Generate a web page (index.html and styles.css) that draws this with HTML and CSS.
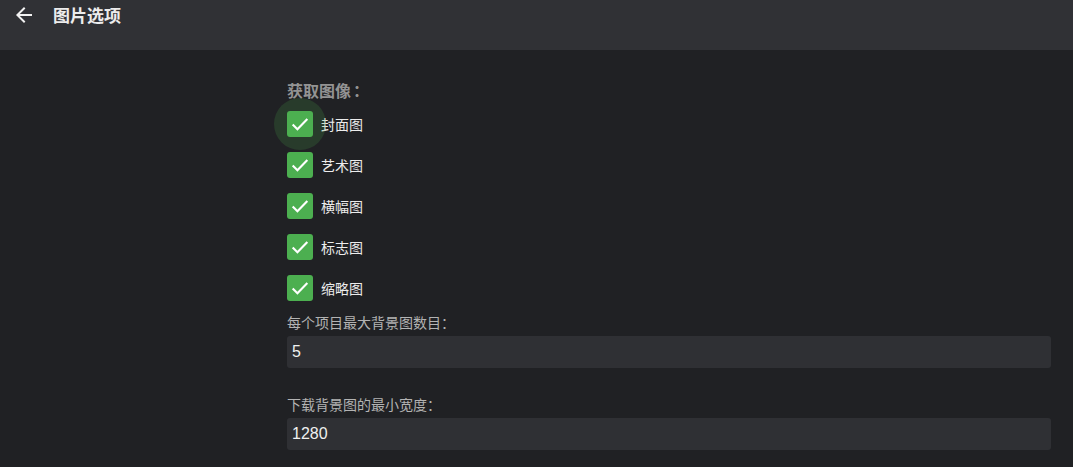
FILE: index.html
```html
<!DOCTYPE html>
<html lang="zh">
<head>
  <meta charset="UTF-8">
  <meta name="viewport" content="width=device-width, initial-scale=1.0">
  <title>图片选项</title>
  <link rel="stylesheet" href="styles.css">
</head>
<body>

  <div class="header">
    <button class="back-btn" title="返回">
      <svg viewBox="0 0 24 24" width="24" height="24"><path d="M20 11H7.83l5.59-5.59L12 4l-8 8 8 8 1.41-1.41L7.83 13H20v-2z" fill="currentColor"/></svg>
    </button>
    <h3 class="page-title">图片选项</h3>
  </div>

  <div class="content">
    <h3 class="section-title">获取图像<span class="colon">：</span></h3>

    <div class="checkbox-list">
      <label class="checkbox-row focused"><span class="box"><svg viewBox="0 0 24 24"><path d="M4 12.5l5.2 5.2L20 6.5" /></svg></span>封面图</label>
      <label class="checkbox-row"><span class="box"><svg viewBox="0 0 24 24"><path d="M4 12.5l5.2 5.2L20 6.5" /></svg></span>艺术图</label>
      <label class="checkbox-row"><span class="box"><svg viewBox="0 0 24 24"><path d="M4 12.5l5.2 5.2L20 6.5" /></svg></span>横幅图</label>
      <label class="checkbox-row"><span class="box"><svg viewBox="0 0 24 24"><path d="M4 12.5l5.2 5.2L20 6.5" /></svg></span>标志图</label>
      <label class="checkbox-row"><span class="box"><svg viewBox="0 0 24 24"><path d="M4 12.5l5.2 5.2L20 6.5" /></svg></span>缩略图</label>
    </div>

    <div class="input-group">
      <label for="maxBackdrops">每个项目最大背景图数目<span class="colon">：</span></label>
      <input type="text" id="maxBackdrops" value="5">
    </div>

    <div class="input-group">
      <label for="minWidth">下载背景图的最小宽度<span class="colon">：</span></label>
      <input type="text" id="minWidth" value="1280">
    </div>
  </div>

</body>
</html>
```

FILE: styles.css
```css
body {
  font-family: "Noto Sans CJK SC", "Liberation Sans", sans-serif;
  background-color: #202124;
  color: #e6e6e6;
  margin: 0;
  overflow: hidden;
}
.colon {
  font-family: "Noto Sans CJK TC", sans-serif;
}
.header {
  display: flex;
  align-items: flex-start;
  height: 50px;
  background-color: #303135;
  padding-left: 12px;
  box-sizing: border-box;
}
.back-btn {
  background: none;
  border: none;
  color: #f2f2f2;
  padding: 0;
  margin-top: 3px;
  width: 24px;
  height: 24px;
  cursor: pointer;
}
.back-btn svg {
  display: block;
}
.page-title {
  margin: 4px 0 0 17px;
  font-size: 17px;
  line-height: 22px;
  font-weight: bold;
  color: #ececec;
}
.content {
  padding: 30px 22px 0 287px;
}
.section-title {
  margin: 0 0 11px;
  font-size: 16px;
  line-height: 20px;
  font-weight: bold;
  color: #939393;
}
.section-title .colon {
  margin-left: 2px;
}
.checkbox-list {
  display: flex;
  flex-direction: column;
  gap: 15px;
}
.checkbox-row {
  position: relative;
  display: flex;
  align-items: center;
  height: 26px;
  font-size: 14px;
  color: #ececec;
}
.box {
  position: relative;
  width: 26px;
  height: 26px;
  border-radius: 3px;
  background-color: #4caf50;
  margin-right: 8px;
  display: flex;
  align-items: center;
  justify-content: center;
}
.box svg {
  width: 22px;
  height: 22px;
  fill: none;
  stroke: #fff;
  stroke-width: 2.3;
}
.focused::before {
  content: "";
  position: absolute;
  left: -13px;
  top: -13px;
  width: 52px;
  height: 52px;
  border-radius: 50%;
  background-color: rgba(76, 175, 80, 0.18);
}
.input-group {
  margin-top: 12px;
}
.input-group + .input-group {
  margin-top: 27px;
}
.input-group label {
  display: block;
  font-size: 14px;
  line-height: 18px;
  color: #b3b3b3;
  margin-bottom: 5px;
}
.input-group input {
  display: block;
  width: 100%;
  box-sizing: border-box;
  height: 32px;
  padding: 0 5px;
  background-color: #2f3034;
  color: #f0f0f0;
  border: none;
  border-radius: 3px;
  font-family: "Liberation Sans", sans-serif;
  font-size: 16px;
  outline: none;
}
```
